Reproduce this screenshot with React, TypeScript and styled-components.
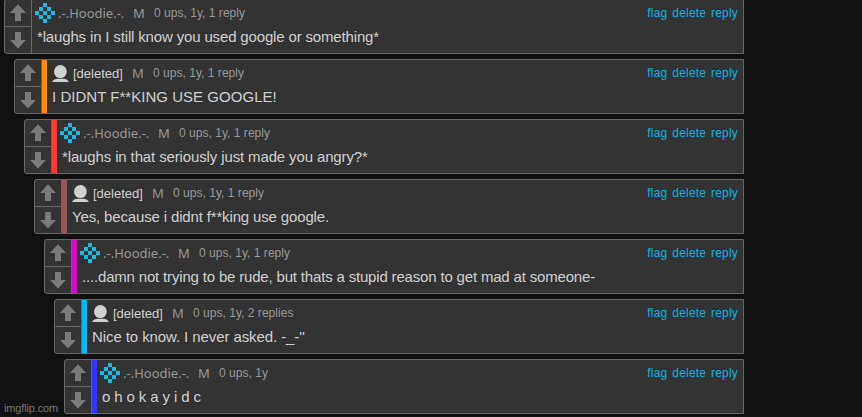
import React from "react";
import styled, { createGlobalStyle } from "styled-components";

const Global = createGlobalStyle`
  html, body { margin: 0; background: #111; overflow: hidden; }
  body { font-family: "Liberation Sans", Arial, sans-serif; color: #d0d0d0; }
`;
const Page = styled.main`
  position: relative;
  height: 417px;
  overflow: hidden;
  background: #111;
`;
const Thread = styled.div`
  display: flex;
  flex-direction: column;
  gap: 5px;
  width: 744px;
  margin-top: -1px;
`;
const Comment = styled.article<{ $depth: number }>`
  box-sizing: border-box;
  display: flex;
  flex: none;
  height: 55px;
  margin-left: ${(p) => 4 + p.$depth * 10}px;
  border: 1px solid #666;
  border-radius: 3px 0 0 3px;
  background: #333;
`;
const Votes = styled.div`
  display: flex;
  flex-direction: column;
  width: 26px;
  border-right: 1px solid #666;
`;
const Vote = styled.button`
  box-sizing: border-box;
  display: flex;
  justify-content: center;
  align-items: flex-start;
  height: 26px;
  padding: 4px 0 0;
  border: 0;
  background: none;
  & + & { border-top: 1px solid #666; height: 27px; padding-top: 5px; }
  svg { display: block; }
`;
const Bar = styled.div<{ $color: string }>`
  width: 5px;
  background: ${(p) => p.$color};
`;
const Body = styled.div`
  flex: 1;
  min-width: 0;
  padding: 0 5px;
`;
const Header = styled.header`
  display: flex;
  height: 26px;
  line-height: 26px;
  white-space: pre;
  font-size: 12px;
  color: #999;
`;
const Avatar = styled.svg`
  flex: none;
  margin: 3px 3px 0 -2px;
`;
const Name = styled.span<{ $plain?: boolean }>`
  font-family: ${(p) => (p.$plain ? '"Liberation Sans"' : '"Noto Sans"')}, sans-serif;
  font-size: 13px;
  color: ${(p) => (p.$plain ? "#d0d0d0" : "#999")};
  width: ${(p) => (p.$plain ? 50 : 66)}px;
  padding-top: ${(p) => (p.$plain ? 1 : 0)}px;
`;
const Mod = styled.span`
  font-family: "Noto Sans", sans-serif;
  font-size: 13px;
  width: 12px;
  margin: 0 9px;
`;
const Stats = styled.span`
  letter-spacing: 0.03px;
`;
const Actions = styled.nav`
  display: flex;
  gap: 4.8px;
  margin-left: auto;
  letter-spacing: 0.2px;
  color: #10b2e2;
`;
const Message = styled.p<{ $tracking: number }>`
  margin: 0;
  font-size: 15px;
  line-height: 22px;
  letter-spacing: ${(p) => p.$tracking}px;
  white-space: pre;
`;
const Watermark = styled.div`
  position: absolute;
  left: 4px;
  bottom: 2px;
  font-size: 11px;
  line-height: 13px;
  letter-spacing: -0.15px;
  color: #777;
`;

const Arrow = ({ down }: { down?: boolean }) => (
  <svg width="16" height="17" viewBox="0 0 16 17">
    <path fill="#7b7b7b" d={down ? "M5 0h6v8h5L8 16.500 0 8h5z" : "M8 .3L16 9h-5v8H5V9H0z"} />
  </svg>
);

const PixelIcon = () => (
  <Avatar width="20" height="20" viewBox="0 0 20 20" shapeRendering="crispEdges" fill="#16bce8">
    <path d="M8 0h4v4H8zM4 4h4v4H4zM12 4h4v4h-4zM0 8h4v4H0zM8 8h4v4H8zM16 8h4v4h-4zM4 12h4v4H4zM12 12h4v4h-4zM8 16h4v4H8z" />
  </Avatar>
);
const PersonIcon = () => (
  <Avatar width="20" height="20" viewBox="0 0 20 20" fill="#d0d0d0">
    <ellipse cx="10.4" cy="8.6" rx="6.4" ry="6.5" />
    <path d="M2 19c.6-2 3-3.300 5.300-3.300h6.200c2.300 0 4.700 1.300 5.300 3.300z" />
  </Avatar>
);

const comments = [
  { hoodie: true, color: "", stats: "0 ups, 1y, 1 reply", tracking: -0.155, text: "*laughs in I still know you used google or something*" },
  { hoodie: false, color: "#ff8c0a", stats: "0 ups, 1y, 1 reply", tracking: 0.03, text: "I DIDNT F**KING USE GOOGLE!" },
  { hoodie: true, color: "#ff3838", stats: "0 ups, 1y, 1 reply", tracking: -0.13, text: "*laughs in that seriously just made you angry?*" },
  { hoodie: false, color: "#965858", stats: "0 ups, 1y, 1 reply", tracking: -0.15, text: "Yes, because i didnt f**king use google." },
  { hoodie: true, color: "#d808c8", stats: "0 ups, 1y, 1 reply", tracking: -0.175, text: "....damn not trying to be rude, but thats a stupid reason to get mad at someone-" },
  { hoodie: false, color: "#08bcf0", stats: "0 ups, 1y, 2 replies", tracking: -0.09, text: "Nice to know. I never asked. -_-''" },
  { hoodie: true, color: "#3434ff", stats: "0 ups, 1y", tracking: -0.12, text: "o h o k a y i d c" },
];

export default function App() {
  return (
    <Page>
      <Global />
      <Thread>
        {comments.map((c, i) => (
          <Comment key={i} $depth={i}>
            <Votes>
              <Vote aria-label="Upvote"><Arrow /></Vote>
              <Vote aria-label="Downvote"><Arrow down /></Vote>
            </Votes>
            {c.color && <Bar $color={c.color} />}
            <Body>
              <Header>
                {c.hoodie ? <PixelIcon /> : <PersonIcon />}
                <Name $plain={!c.hoodie}>{c.hoodie ? ".-.Hoodie.-." : "[deleted]"}</Name>
                <Mod>M</Mod>
                <Stats>{c.stats}</Stats>
                <Actions><span>flag</span><span>delete</span><span>reply</span></Actions>
              </Header>
              <Message $tracking={c.tracking}>{c.text}</Message>
            </Body>
          </Comment>
        ))}
      </Thread>
      <Watermark>imgflip.com</Watermark>
    </Page>
  );
}
